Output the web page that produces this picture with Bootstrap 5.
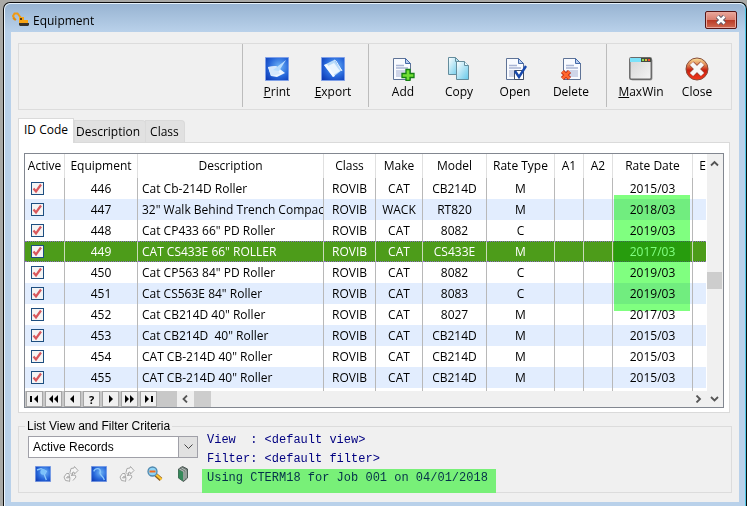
<!DOCTYPE html>
<html lang="en">
<head>
<meta charset="utf-8">
<meta name="viewport" content="width=device-width, initial-scale=1">
<title>Equipment</title>
<link href="https://cdn.jsdelivr.net/npm/bootstrap@5.3.0/dist/css/bootstrap.min.css" rel="stylesheet">
<style>
body{background:#a9a9a6;color:#000;font:12px/16px "Open Sans","Noto Sans",sans-serif}
button,input,select{font:inherit;color:inherit}
.app-window{margin:2px 0 0 3px;border:1px solid #0c0c0c;border-bottom:0;border-radius:7px 7px 0 0;background:#b9d1ea;padding:0 7px 5px;box-shadow:inset 1px 1px 0 #eef6fd,inset -1px 0 0 #4fc8e6}
.title-bar{height:29px;margin:0 -6px;padding:0 8px 0 7px;border-top:1px solid #e6f2fb;border-radius:6px 6px 0 0;background:linear-gradient(#98b4d2,#b9d1ea)}
.title-bar h1{font-size:12px;line-height:16px;padding-top:9px}
.close-x{width:32px;height:18px;margin-top:7px;border:1px solid #571616;border-radius:2px;background:linear-gradient(#e9a89c 0%,#d97f70 48%,#b93a26 52%,#cf6a52 100%);box-shadow:inset 0 0 0 1px #e9a79d}
.client{background:#f0f0f0;padding:11px 7px 9px}
.tool-strip{border:1px solid #dcdcdc;height:67px}
.tool-group{border-left:1px solid #bcbcbc;margin-bottom:2px;padding:0 6px;align-items:flex-start}
.tool-group+.tool-group{margin-left:1px}
.tool-btn{width:56px;border:0;background:none;padding:13px 0 0}
.tool-btn svg{display:block;margin:0 auto 3px}
.tab-strip{margin-top:8px}
.tab-btn{border:1px solid #dadada;border-bottom:0;background:#e1e1e1;height:22px;padding:0 5px 0 1px;border-radius:0 4px 0 0;margin-right:1px}
.tab-btn.active{background:#fff;height:25px;width:56px;margin:0 0 -1px;padding:0 0 2px;border-radius:0;z-index:1}
.tab-btn.short{padding:0 5px 0 4px;margin-left:-2px}
.tab-page{border:1px solid #dadada;background:#fff;margin-right:2px;padding:10px 5px 4px}
.grid-box{border:1px solid #828790}
.grid-pane{min-width:0}
.grid-view{overflow:hidden;margin-right:1px}
.grid-table{table-layout:fixed;width:100%;border-collapse:separate;border-spacing:0;text-align:center;white-space:nowrap}
.grid-table th{height:24px;font-weight:400;padding:0;border-right:1px solid #e0e0e0;overflow:hidden}
.grid-table td{height:21px;padding:0;border-right:1px solid #b8b8b8;overflow:hidden;line-height:16px}
.grid-table tr>:last-child{border-right:0}
.grid-table td:nth-child(3){text-align:left;padding-left:4px}
.grid-table tbody tr:nth-child(even){background:#e2edfe}
.grid-table tbody tr.picked{background:#4d9c1a;color:#fff}
.grid-table tr.picked td{border-top:1px dotted #8a6ac0;border-bottom:1px dotted #8a6ac0;border-right-color:#c9dcba}
.grid-table tfoot td{height:3px}
.c-40{width:40px}.c-73{width:73px}.c-52{width:52px}.c-47{width:47px}.c-64{width:64px}.c-68{width:68px}.c-29{width:29px}.c-80{width:80px}.c-13{width:13px}
.tick{appearance:none;display:block;width:13px;height:13px;margin:0 0 0 6px;border:1px solid #1d4e80;background:#f4f4f4 url("data:image/svg+xml,%3Csvg xmlns='http://www.w3.org/2000/svg' viewBox='0 0 11 11'%3E%3Cpath d='M1.500 5.500 4 8.500 9 1.500' fill='none' stroke='%23d8575c' stroke-width='2.200'/%3E%3C/svg%3E")}
.date-mark{position:absolute;top:41px;right:16px;width:76px;height:116px;background:#80ff80;mix-blend-mode:multiply;pointer-events:none}
.v-scroll{width:16px;background:#f0f0f0;padding:5px 1px 4px 0}
.v-thumb{width:15px;height:17px;background:#cdcdcd;margin-top:104px}
.grid-foot{height:16px;background:#f0f0f0}
.nav-keys{background:#c8c8c8;width:152px;padding-left:1px;gap:2px}
.nav-keys button{width:17px;height:16px;border:1px solid #a6a6a6;background:#f0f0f0;padding:0;line-height:13px;font-weight:700;font-size:11px}
.nav-keys svg{display:block;margin:auto}
.h-thumb{width:17px;height:16px;background:#cdcdcd}
.criteria{border:1px solid #dcdcdc;margin-top:8px;font-family:"Liberation Sans",Arial,sans-serif}
.criteria legend{float:none;width:auto;margin:0 0 0 6px;padding:0 2px;font-size:12px;line-height:10px}
.pick-box{width:170px;margin:5px 0 0 9px}
.pick-box select{appearance:none;display:block;width:100%;height:22px;border:1px solid #a0a0a8;border-radius:0;padding:0 4px;background:#fff}
.pick-box span{top:0;right:0;width:20px;height:22px;border:1px solid #a0a0a8;background:#e1e1e1;pointer-events:none}
.mini-keys{margin:8px 0 0 16px;gap:12px}
.mini-keys button{width:16px;height:16px;border:0;padding:0;background:none}
.mini-keys svg{display:block}
.status-text{font:12px/19px "Liberation Mono","Courier New",monospace;color:#000080;white-space:pre;margin-left:4px}
.status-text p{margin:0;padding-left:5px}
.status-text .job-note{background:#78f078;color:#04304a;height:24px;width:294px;margin-bottom:-1px}
</style>
<script src="https://cdn.jsdelivr.net/npm/bootstrap@5.3.0/dist/js/bootstrap.bundle.min.js"></script>
</head>
<body class="d-flex flex-column min-vh-100">
<svg width="0" height="0" class="position-absolute" aria-hidden="true">
<defs>
<radialGradient id="blue" cx=".6" cy=".4" r=".8"><stop offset="0" stop-color="#6fb4f6"/><stop offset=".55" stop-color="#2767da"/><stop offset="1" stop-color="#0a35b0"/></radialGradient>
<linearGradient id="sheet" x2="1" y2="1"><stop stop-color="#fff"/><stop offset="1" stop-color="#63c8ea"/></linearGradient>
<linearGradient id="red" x2="0" y2="1"><stop stop-color="#fbe7a0"/><stop offset=".35" stop-color="#dc7a4a"/><stop offset=".55" stop-color="#c8200f"/><stop offset="1" stop-color="#f5391c"/></linearGradient>
<linearGradient id="pane" x2="1" y2="1"><stop stop-color="#d4d4d4"/><stop offset="1" stop-color="#f4f4f4"/></linearGradient>
<symbol id="page" viewBox="0 0 24 24"><path d="M3.500 1.500h12l5 5v16h-17z" fill="#f9fbff" stroke="#5f7396"/><path d="M15.500 1.500v5h5z" fill="#b9cdf0" stroke="#466ba8"/><path d="M6 8.500h8M6 11h12" stroke="#a9b5d4" stroke-width="1.500"/><path d="M6 13h12v7H6z" fill="#cfd5e8"/></symbol>
<symbol id="cycle" viewBox="0 0 16 16"><g fill="#f5f5f5" stroke="#a9a9a9"><path d="M3.500 7.500 1 11l1.500 3.500 3 .5 1 .5.5-4-3.500.500 1-1.500 2 .5-.5-3.500z"/><path d="m8 2.500 3-.5.500-1.500 3.500 4-3.500 3.500-.5-2-1.500.5V9L7 6.500z"/><path d="m8 9.500 4-.5 1 2-3 3.500"/></g></symbol>
</defs>
</svg>
<main class="app-window flex-grow-1 d-flex flex-column">
<header class="title-bar d-flex">
<svg class="mt-2" width="17" height="15" viewBox="0 0 17 15" aria-hidden="true"><path d="m3 8-2-4 1.500-2.500h3L9 6" fill="none" stroke="#f29a12" stroke-width="2"/><path d="M1 6l3 2" stroke="#e08a10" stroke-width="2"/><path d="M7 5h5v3h4v3H7z" fill="#f8a414"/><path d="M8 6h2v2H8z" fill="#513a12"/><path d="M7 11h10v2l-1 1H8l-1-1z" fill="#38332c"/></svg>
<h1 class="m-0 ms-1 flex-grow-1 fw-normal">Equipment</h1>
<button class="close-x p-0 d-flex align-items-center justify-content-center" type="button" aria-label="Close window"><svg width="12" height="10" viewBox="0 0 12 10"><path d="m2.500 1.500 7 7m0-7-7 7" stroke="#5a5a6a" stroke-width="4.500"/><path d="m2.500 1.500 7 7m0-7-7 7" stroke="#fff" stroke-width="2.500"/></svg></button>
</header>
<div class="client flex-grow-1">
<div class="tool-strip d-flex justify-content-end" role="toolbar" aria-label="Equipment actions">
<div class="tool-group d-flex">
<button class="tool-btn" type="button"><svg width="24" height="24" viewBox="0 0 24 24"><path fill="url(#blue)" stroke="#7fa0e8" d="M.5.500h23v23H.5z"/><path d="m3 10 8-1 9 7-8 4-6-1z" fill="#eef6ff"/><path d="m3 10 8-1 4 8-9 2z" fill="#d5e8fc"/><path d="m8 13 13-10-7 11z" fill="#b8ddff"/></svg><u>P</u>rint</button>
<button class="tool-btn" type="button"><svg width="24" height="24" viewBox="0 0 24 24"><path fill="url(#blue)" stroke="#7fa0e8" d="M.5.500h23v23H.5z"/><path d="m3 8 10-5 8 10-9 7z" fill="#b8dcfa"/><path d="m5 10 8-4 6 8-7 4z" fill="#eaf6ff"/><path d="m3 8 3-1 8 12-2 1z" fill="#f6fbff"/><path d="m13 3 2 1 6 10" fill="none" stroke="#e8f4ff"/></svg><u>E</u>xport</button>
</div>
<div class="tool-group d-flex">
<button class="tool-btn" type="button"><svg width="24" height="24" viewBox="0 0 24 24"><use href="#page" x="-1"/><path d="M14 13h4v4h4v4h-4v3h-4v-3h-4v-4h4z" transform="translate(1 -.5)" fill="#72df35" stroke="#148013" stroke-width="1.300"/></svg>Add</button>
<button class="tool-btn" type="button"><svg width="24" height="24" viewBox="0 0 24 24"><path d="M1.500.500h7l4 4v13h-11z" fill="url(#sheet)" stroke="#648c9c"/><path d="M8.500.500v4h4" fill="none" stroke="#648c9c"/><path d="M9.500 4.500h8l4 4v14h-12z" fill="url(#sheet)" stroke="#648c9c"/><path d="M17.500 4.500v4h4" fill="#e8faff" stroke="#648c9c"/></svg>Copy</button>
<button class="tool-btn" type="button"><svg width="24" height="24" viewBox="0 0 24 24"><use href="#page"/><path d="M11.500 13.500h9v9h-9z" fill="#fff" stroke="#414d64"/><path d="m12 14 4 6 7-11" fill="none" stroke="#1748ad" stroke-width="2.400"/></svg>Open</button>
<button class="tool-btn" type="button"><svg width="24" height="24" viewBox="0 0 24 24"><use href="#page" x="1"/><path d="m3.500 14.500 7 7m0-7-7 7" stroke="#b62816" stroke-width="4.500"/><path d="m3.500 14.500 7 7m0-7-7 7" stroke="#ff672e" stroke-width="2.500"/></svg>Delete</button>
</div>
<div class="tool-group d-flex">
<button class="tool-btn" type="button"><svg width="24" height="24" viewBox="0 0 24 24"><rect x="1.500" y="1.500" width="22" height="22" rx="2" fill="#aaa"/><rect x=".8" y=".8" width="21.500" height="21.500" rx="1.500" fill="url(#pane)" stroke="#6a6a6a" stroke-width="1.500"/><path d="M1 1h11v4H1z" fill="#7be2fa"/><path d="M12 1h10v4H12z" fill="#454b42"/><path d="M13 2h2v2h-2z" fill="#8d5"/><path d="M16 2h2v2h-2z" fill="#db3"/><path d="M19 2h2v2h-2z" fill="#e43"/></svg><u>M</u>axWin</button>
<button class="tool-btn" type="button"><svg width="24" height="24" viewBox="0 0 24 24"><circle cx="12" cy="12" r="11" fill="url(#red)" stroke="#884c3a"/><path d="m6.500 6.500 11 11m0-11-11 11" stroke="#9b4b3a" stroke-width="6"/><path d="m6.500 6.500 11 11m0-11-11 11" stroke="#f7f7f7" stroke-width="4.500"/></svg>Close</button>
</div>
</div>
<div class="tab-strip d-flex align-items-end" role="tablist">
<button class="tab-btn active position-relative" type="button" role="tab" aria-selected="true">ID Code</button>
<button class="tab-btn" type="button" role="tab" aria-selected="false">Description</button>
<button class="tab-btn short" type="button" role="tab" aria-selected="false">Class</button>
</div>
<section class="tab-page">
<div class="grid-box">
<div class="d-flex">
<div class="grid-pane flex-grow-1 d-flex flex-column">
<div class="grid-view position-relative">
<table class="grid-table">
<colgroup><col class="c-40"><col class="c-73"><col><col class="c-52"><col class="c-47"><col class="c-64"><col class="c-68"><col class="c-29"><col class="c-29"><col class="c-80"><col class="c-13"></colgroup>
<thead><tr><th>Active</th><th>Equipment</th><th>Description</th><th>Class</th><th>Make</th><th>Model</th><th>Rate Type</th><th>A1</th><th>A2</th><th>Rate Date</th><th class="text-end">E</th></tr></thead>
<tbody>
<tr><td><input class="tick" type="checkbox" checked aria-label="446 active"></td><td>446</td><td>Cat Cb-214D Roller</td><td>ROVIB</td><td>CAT</td><td>CB214D</td><td>M</td><td></td><td></td><td>2015/03</td><td></td></tr>
<tr><td><input class="tick" type="checkbox" checked aria-label="447 active"></td><td>447</td><td>32" Walk Behind Trench Compacto</td><td>ROVIB</td><td>WACK</td><td>RT820</td><td>M</td><td></td><td></td><td>2018/03</td><td></td></tr>
<tr><td><input class="tick" type="checkbox" checked aria-label="448 active"></td><td>448</td><td>Cat CP433 66" PD Roller</td><td>ROVIB</td><td>CAT</td><td>8082</td><td>C</td><td></td><td></td><td>2019/03</td><td></td></tr>
<tr class="picked"><td><input class="tick" type="checkbox" checked aria-label="449 active"></td><td>449</td><td>CAT CS433E 66" ROLLER</td><td>ROVIB</td><td>CAT</td><td>CS433E</td><td>M</td><td></td><td></td><td>2017/03</td><td></td></tr>
<tr><td><input class="tick" type="checkbox" checked aria-label="450 active"></td><td>450</td><td>Cat CP563 84" PD Roller</td><td>ROVIB</td><td>CAT</td><td>8082</td><td>C</td><td></td><td></td><td>2019/03</td><td></td></tr>
<tr><td><input class="tick" type="checkbox" checked aria-label="451 active"></td><td>451</td><td>Cat CS563E 84" Roller</td><td>ROVIB</td><td>CAT</td><td>8083</td><td>C</td><td></td><td></td><td>2019/03</td><td></td></tr>
<tr><td><input class="tick" type="checkbox" checked aria-label="452 active"></td><td>452</td><td>Cat CB214D 40" Roller</td><td>ROVIB</td><td>CAT</td><td>8027</td><td>M</td><td></td><td></td><td>2017/03</td><td></td></tr>
<tr><td><input class="tick" type="checkbox" checked aria-label="453 active"></td><td>453</td><td>Cat CB214D&nbsp; 40" Roller</td><td>ROVIB</td><td>CAT</td><td>CB214D</td><td>M</td><td></td><td></td><td>2015/03</td><td></td></tr>
<tr><td><input class="tick" type="checkbox" checked aria-label="454 active"></td><td>454</td><td>CAT CB-214D 40" Roller</td><td>ROVIB</td><td>CAT</td><td>CB214D</td><td>M</td><td></td><td></td><td>2015/03</td><td></td></tr>
<tr><td><input class="tick" type="checkbox" checked aria-label="455 active"></td><td>455</td><td>CAT CB-214D 40" Roller</td><td>ROVIB</td><td>CAT</td><td>CB214D</td><td>M</td><td></td><td></td><td>2015/03</td><td></td></tr>
</tbody>
<tfoot><tr><td></td><td></td><td></td><td></td><td></td><td></td><td></td><td></td><td></td><td></td><td></td></tr></tfoot>
</table>
<div class="date-mark"></div>
</div>
<div class="grid-foot d-flex">
<div class="nav-keys d-flex">
<button type="button" aria-label="First"><svg width="11" height="8" viewBox="0 0 11 8"><path d="M1 1h2v6H1zM9 0v8L5 4z"/></svg></button>
<button type="button" aria-label="Page back"><svg width="11" height="8" viewBox="0 0 11 8"><path d="M5 0v8L1 4zM10 0v8L6 4z"/></svg></button>
<button type="button" aria-label="Previous"><svg width="11" height="8" viewBox="0 0 11 8"><path d="M7 0v8L3 4z"/></svg></button>
<button type="button">?</button>
<button type="button" aria-label="Next"><svg width="11" height="8" viewBox="0 0 11 8"><path d="M4 0v8l4-4z"/></svg></button>
<button type="button" aria-label="Page forward"><svg width="11" height="8" viewBox="0 0 11 8"><path d="M1 0v8l4-4zM6 0v8l4-4z"/></svg></button>
<button type="button" aria-label="Last"><svg width="11" height="8" viewBox="0 0 11 8"><path d="M2 0v8l4-4zM8 1h2v6H8z"/></svg></button>
</div>
<div class="d-flex align-items-center flex-grow-1 ps-1">
<svg class="me-1" width="9" height="8" viewBox="0 0 9 8"><path d="M6 .5 2.500 4 6 7.500" fill="none" stroke="#555" stroke-width="1.800"/></svg>
<div class="h-thumb"></div>
<svg class="ms-auto me-1" width="9" height="8" viewBox="0 0 9 8"><path d="M2.500.500 6 4 2.500 7.500" fill="none" stroke="#555" stroke-width="1.800"/></svg>
</div>
</div>
</div>
<div class="v-scroll d-flex flex-column align-items-center">
<svg width="9" height="9" viewBox="0 0 9 9"><path d="M1 6.500 4.500 3 8 6.500" fill="none" stroke="#555" stroke-width="1.800"/></svg>
<div class="v-thumb"></div>
<svg class="mt-auto" width="9" height="9" viewBox="0 0 9 9"><path d="M1 3 4.500 6.500 8 3" fill="none" stroke="#555" stroke-width="1.800"/></svg>
</div>
</div>
</div>
</section>
<fieldset class="criteria">
<legend>List View and Filter Criteria</legend>
<div class="d-flex">
<div>
<div class="pick-box position-relative"><select aria-label="List view"><option>Active Records</option></select><span class="position-absolute d-flex align-items-center justify-content-center"><svg width="9" height="6" viewBox="0 0 9 6"><path d="m.5.500 4 4 4-4" fill="none" stroke="#444"/></svg></span></div>
<div class="mini-keys d-flex">
<button type="button" aria-label="View"><svg width="16" height="16" viewBox="0 0 24 24"><path fill="url(#blue)" stroke="#7fa0e8" d="M.5.500h23v23H.5z"/><path d="m3 6 6-2 8 4-3 5 3 8" fill="none" stroke="#8cc8fa" stroke-width="2"/><circle cx="12" cy="9" r="4" fill="#7cc1fa"/></svg></button>
<button type="button" aria-label="Reset view"><svg width="16" height="16"><use href="#cycle"/></svg></button>
<button type="button" aria-label="Filter"><svg width="16" height="16" viewBox="0 0 24 24"><path fill="url(#blue)" stroke="#7fa0e8" d="M.5.500h23v23H.5z"/><path d="M4 8c3-6 10-5 10 0-3 6 4 5 6 13" fill="none" stroke="#8cc8fa" stroke-width="2"/></svg></button>
<button type="button" aria-label="Reset filter"><svg width="16" height="16"><use href="#cycle"/></svg></button>
<button type="button" aria-label="Search"><svg width="16" height="16" viewBox="0 0 16 16"><path d="m9 9 5 4.500" stroke="#8b5d20" stroke-width="4"/><path d="m9 8.500 5.500 5" stroke="#ffc62f" stroke-width="2.200"/><circle cx="5.500" cy="5.500" r="4.500" fill="#8fd4f6" stroke="#4f87ad" stroke-width="1.300"/><path d="M2.500 5.500h6" stroke="#f26a20" stroke-width="2"/></svg></button>
<button type="button" aria-label="Book"><svg width="16" height="16" viewBox="0 0 16 16"><path d="m3.500 3 4-2.500 5 2.500v9l-4 3.500-5-3.500z" fill="#707a76" stroke="#4c5a55"/><path d="m3.500 3.500 4.500 2.500v9l-4.500-3z" fill="#35895a"/><path d="m4.500 3 4.500 2.500V14M6.500 2l4.500 2.500v8" fill="none" stroke="#b9c4be"/></svg></button>
</div>
</div>
<div class="status-text"><p>View  : &lt;default view&gt;</p><p>Filter: &lt;default filter&gt;</p><p class="job-note">Using CTERM18 for Job 001 on 04/01/2018</p></div>
</div>
</fieldset>
</div>
</main>
</body>
</html>
